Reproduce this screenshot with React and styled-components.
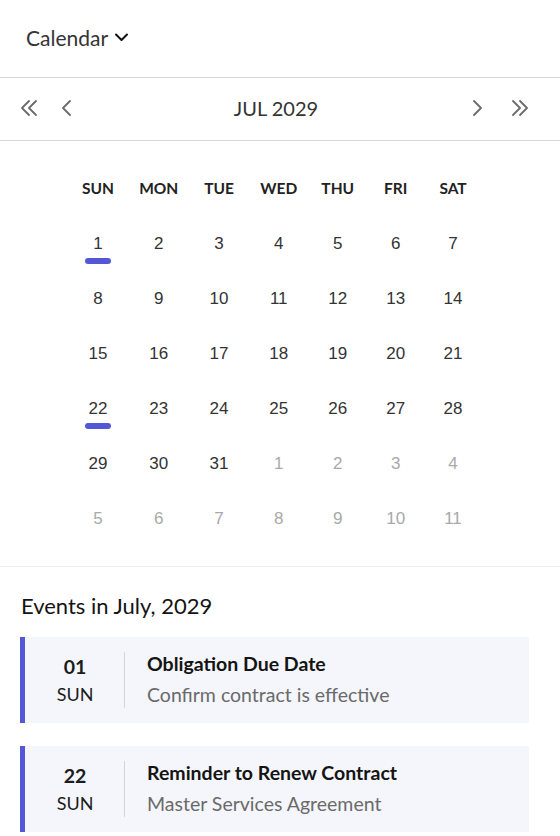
import React from "react";
import styled, { createGlobalStyle } from "styled-components";

const Global = createGlobalStyle`
  html, body { margin: 0; padding: 0; background: #fff; }
  body { font-family: Lato, "Noto Sans", sans-serif; color: #333; }
  * { box-sizing: border-box; }
`;

const Page = styled.div`
  width: 560px;
  height: 836px;
  overflow: hidden;
  background: #fff;
`;

const Header = styled.div`
  height: 78px;
  display: flex;
  align-items: center;
  padding: 0 0 3px 26px;
  border-bottom: 1px solid #d8d8d8;
`;

const HeaderTitle = styled.button`
  display: flex;
  align-items: center;
  gap: 6px;
  border: 0;
  background: none;
  padding: 0;
  font-family: Lato, sans-serif;
  font-size: 21px;
  color: #333;
`;

const Nav = styled.div`
  height: 63px;
  display: flex;
  align-items: center;
  padding: 0 31px 2px 20px;
  border-bottom: 1px solid #d8d8d8;
`;

const NavGroup = styled.div`
  display: flex;
  align-items: center;
  gap: ${(p) => p.$gap}px;
`;

const NavBtn = styled.button`
  border: 0;
  background: none;
  padding: 0;
  width: 20px;
  height: 20px;
  display: flex;
  align-items: center;
  justify-content: center;
  color: #6b6b6b;
`;

const MonthLabel = styled.div`
  flex: 1;
  text-align: center;
  padding-left: 8px;
  font-size: 20px;
  color: #333;
`;

const Grid = styled.div`
  display: grid;
  grid-template-columns: 61px 60.5px 60px 59.5px 58.5px 57.5px 57px;
  grid-auto-rows: 55px;
  padding: 19px 0 21px 67.5px;
  border-bottom: 1px solid #eeeeee;
`;

const WeekDay = styled.div`
  display: flex;
  align-items: center;
  justify-content: center;
  font-weight: 700;
  font-size: 15.5px;
  color: #222;
`;

const DayCell = styled.div`
  position: relative;
  display: flex;
  align-items: center;
  justify-content: center;
  font-family: "Liberation Sans", Arial, sans-serif;
  font-size: 17px;
  padding-top: 2px;
  color: ${(p) => (p.$muted ? "#a9a9a9" : "#333")};
`;

const Marker = styled.span`
  position: absolute;
  left: 50%;
  top: 43px;
  width: 26px;
  height: 6px;
  margin-left: -13px;
  border-radius: 3px;
  background: #5558d6;
`;

const Events = styled.div`
  padding: 26px 31px 0 20px;
`;

const EventsTitle = styled.h2`
  margin: 0 0 18px 1px;
  font-size: 22px;
  font-weight: 400;
  color: #141414;
  line-height: 26px;
`;

const EventList = styled.div`
  display: flex;
  flex-direction: column;
  gap: 23px;
`;

const Card = styled.div`
  display: flex;
  align-items: stretch;
  padding: 15px 0;
  background: #f5f6fb;
  border-left: 5px solid #5558d6;
  height: 86px;
`;

const DateCol = styled.div`
  width: 100px;
  flex: none;
  display: flex;
  flex-direction: column;
  align-items: center;
  justify-content: center;
  gap: 5px;
  border-right: 1px solid #d4d4d8;
  padding-left: 1px;
`;

const DateNum = styled.div`
  font-size: 19.5px;
  font-weight: 700;
  color: #1c1c1c;
  line-height: 22px;
`;

const DateDay = styled.div`
  font-size: 18px;
  color: #1c1c1c;
  line-height: 22px;
`;

const Info = styled.div`
  display: flex;
  flex-direction: column;
  justify-content: center;
  gap: 8px;
  padding-left: 22px;
  margin-top: -3px;
`;

const EventTitle = styled.div`
  font-size: 19.5px;
  font-weight: 700;
  color: #141414;
  line-height: 23px;
`;

const EventSub = styled.div`
  font-size: 19.5px;
  color: #6a6a6a;
  line-height: 23px;
`;

const icons = {
  dleft: ["9 3 2 10 9 17", "16 3 9 10 16 17"],
  left: ["13 3 6 10 13 17"],
  right: ["7 3 14 10 7 17"],
  dright: ["4 3 11 10 4 17", "11 3 18 10 11 17"],
};

const Chevron = ({ kind }) => (
  <svg width="20" height="20" viewBox="0 0 20 20" fill="none" stroke="currentColor" strokeWidth="1.8" strokeLinecap="round" strokeLinejoin="round">
    {icons[kind].map((p) => (
      <polyline key={p} points={p} />
    ))}
  </svg>
);

const weekDays = ["SUN", "MON", "TUE", "WED", "THU", "FRI", "SAT"];

const days = [];
for (let i = 1; i <= 31; i++) days.push({ n: i, muted: false });
for (let i = 1; i <= 11; i++) days.push({ n: i, muted: true });

const markers = new Set([1, 22]);

const events = [
  { num: "01", day: "SUN", title: "Obligation Due Date", sub: "Confirm contract is effective" },
  { num: "22", day: "SUN", title: "Reminder to Renew Contract", sub: "Master Services Agreement" },
];

export default function App() {
  return (
    <Page>
      <Global />
      <Header>
        <HeaderTitle>
          Calendar
          <svg width="15" height="10" viewBox="0 0 15 10" fill="none" stroke="#111" strokeWidth="2" strokeLinecap="round" strokeLinejoin="round">
            <polyline points="2 2.5 7.5 8 13 2.5" />
          </svg>
        </HeaderTitle>
      </Header>
      <Nav>
        <NavGroup $gap={17}>
          <NavBtn><Chevron kind="dleft" /></NavBtn>
          <NavBtn><Chevron kind="left" /></NavBtn>
        </NavGroup>
        <MonthLabel>JUL 2029</MonthLabel>
        <NavGroup $gap={22}>
          <NavBtn><Chevron kind="right" /></NavBtn>
          <NavBtn><Chevron kind="dright" /></NavBtn>
        </NavGroup>
      </Nav>
      <Grid>
        {weekDays.map((d) => (
          <WeekDay key={d}>{d}</WeekDay>
        ))}
        {days.map((d, i) => (
          <DayCell key={i} $muted={d.muted}>
            {d.n}
            {!d.muted && markers.has(d.n) && <Marker />}
          </DayCell>
        ))}
      </Grid>
      <Events>
        <EventsTitle>Events in July, 2029</EventsTitle>
        <EventList>
          {events.map((e) => (
            <Card key={e.num}>
              <DateCol>
                <DateNum>{e.num}</DateNum>
                <DateDay>{e.day}</DateDay>
              </DateCol>
              <Info>
                <EventTitle>{e.title}</EventTitle>
                <EventSub>{e.sub}</EventSub>
              </Info>
            </Card>
          ))}
        </EventList>
      </Events>
    </Page>
  );
}
